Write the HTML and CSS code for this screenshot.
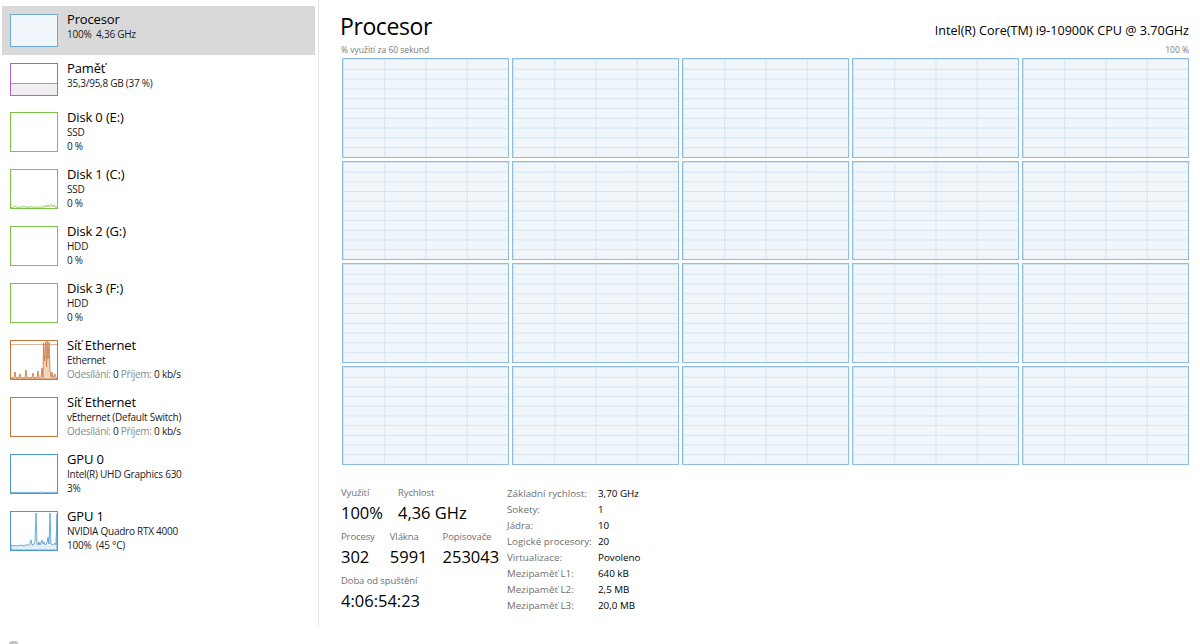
FILE: index.html
```html
<!DOCTYPE html>
<html lang="cs">
<head>
    <meta charset="UTF-8">
    <title>Správce úloh - Procesor</title>
    <link rel="stylesheet" href="styles.css">
</head>
<body>
<div class="app">
    <div class="sidebar">
        <div class="item short selected">
            <div class="thumb cpu"></div>
            <div class="info">
                <div class="name">Procesor</div>
                <div class="sub">100%&nbsp;&nbsp;4,36 GHz</div>
            </div>
        </div>
        <div class="item short">
            <div class="thumb mem"><div class="mem-used"></div></div>
            <div class="info">
                <div class="name">Paměť</div>
                <div class="sub">35,3/95,8 GB (37 %)</div>
            </div>
        </div>
        <div class="item">
            <div class="thumb disk"></div>
            <div class="info">
                <div class="name">Disk 0 (E:)</div>
                <div class="sub">SSD</div>
                <div class="sub">0 %</div>
            </div>
        </div>
        <div class="item">
            <div class="thumb disk">
                <svg viewBox="0 0 46 38" preserveAspectRatio="none">
                    <path d="M0 37.5 L3 37 L4 36.5 L6 37.3 L12 37 L13 36 L14 37.2 L20 37 L21 36.4 L22 37.3 L33 37 L34 35.5 L35 37 L37 35 L38 36.8 L40 34.5 L41 36.5 L43 35 L44 37 L46 37.4" fill="none" stroke="#7cc14a" stroke-width="0.8"/>
                </svg>
            </div>
            <div class="info">
                <div class="name">Disk 1 (C:)</div>
                <div class="sub">SSD</div>
                <div class="sub">0 %</div>
            </div>
        </div>
        <div class="item">
            <div class="thumb disk"></div>
            <div class="info">
                <div class="name">Disk 2 (G:)</div>
                <div class="sub">HDD</div>
                <div class="sub">0 %</div>
            </div>
        </div>
        <div class="item">
            <div class="thumb disk"></div>
            <div class="info">
                <div class="name">Disk 3 (F:)</div>
                <div class="sub">HDD</div>
                <div class="sub">0 %</div>
            </div>
        </div>
        <div class="item">
            <div class="thumb net">
                <svg viewBox="0 0 46 38" preserveAspectRatio="none">
                    <line x1="0" y1="3.5" x2="46" y2="3.5" stroke="#d9a37c" stroke-width="0.8"/>
                    <path d="M0 38 L0 37 L3 36.5 L4 31 L5 37 L8 36.5 L9 33 L10 37 L14 36.8 L15 29 L16 37 L21 36.6 L22 32 L23 37 L26 36.5 L27 30 L28 37 L30 36 L31 27 L32 36.5 L32.5 2 L33.5 20 L34.5 1 L35.5 26 L36 0 L37 18 L38 1 L39 30 L40 36 L41 31 L42 37 L44 33 L45 37 L46 37 L46 38 Z" fill="#f3d6c0" stroke="#c8743a" stroke-width="0.8"/>
                </svg>
            </div>
            <div class="info">
                <div class="name">Síť Ethernet</div>
                <div class="sub">Ethernet</div>
                <div class="sub"><span class="dim">Odesílání:</span> 0 <span class="dim">Příjem:</span> 0 kb/s</div>
            </div>
        </div>
        <div class="item">
            <div class="thumb net"></div>
            <div class="info">
                <div class="name">Síť Ethernet</div>
                <div class="sub">vEthernet (Default Switch)</div>
                <div class="sub"><span class="dim">Odesílání:</span> 0 <span class="dim">Příjem:</span> 0 kb/s</div>
            </div>
        </div>
        <div class="item">
            <div class="thumb gpu">
                <svg viewBox="0 0 46 38" preserveAspectRatio="none">
                    <path d="M0 37.4 L30 37.4 L31 36.6 L32 37.4 L46 37.3" fill="none" stroke="#4a9ad0" stroke-width="0.8"/>
                </svg>
            </div>
            <div class="info">
                <div class="name">GPU 0</div>
                <div class="sub">Intel(R) UHD Graphics 630</div>
                <div class="sub">3%</div>
            </div>
        </div>
        <div class="item">
            <div class="thumb gpu">
                <svg viewBox="0 0 46 38" preserveAspectRatio="none">
                    <path d="M0 38 L0 33 L2 34 L4 33.5 L7 34 L10 33 L13 34 L16 32.5 L18 33.5 L20 28 L21 33 L23 32.5 L24 30 L25 1 L26 31 L27 33 L28 30 L29 33 L31 28 L32 32 L33 30 L34 33 L36 31 L37 25 L38 32 L39 1 L40 32 L42 33 L44 31 L45 33 L46 2 L46 38 Z" fill="#e3eff8" stroke="#4a9ad0" stroke-width="0.8"/>
                </svg>
            </div>
            <div class="info">
                <div class="name">GPU 1</div>
                <div class="sub">NVIDIA Quadro RTX 4000</div>
                <div class="sub">100%&nbsp;&nbsp;(45 °C)</div>
            </div>
        </div>
    </div>

    <div class="main">
        <div class="head">
            <h1>Procesor</h1>
            <div class="cpu-name">Intel(R) Core(TM) i9-10900K CPU @ 3.70GHz</div>
        </div>
        <div class="axis">
            <span>% využití za 60 sekund</span>
            <span>100 %</span>
        </div>
        <div class="cores">
            <div class="core"></div><div class="core"></div><div class="core"></div><div class="core"></div><div class="core"></div>
            <div class="core"></div><div class="core"></div><div class="core"></div><div class="core"></div><div class="core"></div>
            <div class="core"></div><div class="core"></div><div class="core"></div><div class="core"></div><div class="core"></div>
            <div class="core"></div><div class="core"></div><div class="core"></div><div class="core"></div><div class="core"></div>
        </div>

        <div class="stats">
            <div class="live">
                <div class="stat-row">
                    <div class="stat"><div class="label">Využití</div><div class="value">100%</div></div>
                    <div class="stat"><div class="label">Rychlost</div><div class="value">4,36 GHz</div></div>
                </div>
                <div class="stat-row">
                    <div class="stat"><div class="label">Procesy</div><div class="value">302</div></div>
                    <div class="stat"><div class="label">Vlákna</div><div class="value">5991</div></div>
                    <div class="stat"><div class="label">Popisovače</div><div class="value">253043</div></div>
                </div>
                <div class="stat-row">
                    <div class="stat"><div class="label">Doba od spuštění</div><div class="value">4:06:54:23</div></div>
                </div>
            </div>
            <div class="specs">
                <span class="key">Základní rychlost:</span><span>3,70 GHz</span>
                <span class="key">Sokety:</span><span>1</span>
                <span class="key">Jádra:</span><span>10</span>
                <span class="key">Logické procesory:</span><span>20</span>
                <span class="key">Virtualizace:</span><span>Povoleno</span>
                <span class="key">Mezipaměť L1:</span><span>640 kB</span>
                <span class="key">Mezipaměť L2:</span><span>2,5 MB</span>
                <span class="key">Mezipaměť L3:</span><span>20,0 MB</span>
            </div>
        </div>
    </div>
</div>
<div class="footer"><div class="footer-icon"></div></div>
</body>
</html>
```

FILE: styles.css
```css
body { margin: 0; font-family: "Open Sans", "Noto Sans", sans-serif; color: #000; background: #fff; overflow: hidden; height: 644px; }
.app { display: flex; height: 628px; }

.sidebar { width: 313px; padding: 6px 3px 0 2px; border-right: 1px solid #e6e6e6; box-sizing: content-box; }
.item { display: flex; height: 57px; box-sizing: border-box; padding-top: 8px; }
.item.short { height: 49px; }
.item.selected { background: #d9d9d9; }
.thumb { width: 48px; height: 40px; margin-left: 8px; box-sizing: border-box; border: 1px solid #7cc14a; background: #fff; position: relative; overflow: hidden; }
.item.short .thumb { height: 33px; }
.thumb svg { display: block; width: 100%; height: 100%; }
.thumb.cpu { border-color: #6eaad8; background: #f1f6fa; }
.thumb.mem { border-color: #b35fcd; }
.mem-used { position: absolute; left: 0; right: 0; bottom: 0; height: 11px; border-top: 1px solid #c283d6; background: #f2eff3; }
.thumb.disk { border-color: #7cc14a; }
.thumb.net { border-color: #c8743a; }
.thumb.gpu { border-color: #4a9ad0; }

.info { margin-left: 9px; margin-top: -3px; }
.name { font-size: 13px; line-height: 16px; letter-spacing: -0.15px; }
.sub { font-size: 10px; line-height: 14px; letter-spacing: -0.25px; color: #1a1a1a; }
.dim { color: #8a8a8a; }

.main { flex: 1; padding: 8px 11px 0 21px; }
.head { display: flex; justify-content: space-between; align-items: baseline; height: 36px; }
.head h1 { margin: 0; font-size: 23px; font-weight: 400; line-height: 36px; letter-spacing: -0.4px; }
.cpu-name { font-size: 12.6px; }
.axis { display: flex; justify-content: space-between; font-size: 8.5px; line-height: 12px; color: #7a7a7a; padding-left: 1px; }
.cores { display: grid; grid-template-columns: repeat(5, 1fr); grid-template-rows: repeat(4, 99.5px); gap: 3px; margin: 2px 0 0 2px; }
.core {
    border: 1px solid #8fbde0;
    background-color: #f1f6fa;
    background-image: linear-gradient(to right, #d3e4f2 1px, transparent 1px), linear-gradient(to bottom, #d3e4f2 1px, transparent 1px);
    background-size: 25% 10%;
}

.stats { display: flex; margin-top: 21px; padding-left: 1px; }
.live { width: 166px; }
.stat-row { display: flex; gap: 15px; margin-bottom: 4px; }
.label { font-size: 9.5px; line-height: 14px; letter-spacing: -0.1px; color: #707070; }
.value { font-size: 16.5px; line-height: 26px; }
.specs { display: grid; grid-template-columns: 91px auto; grid-auto-rows: 16px; font-size: 9.8px; line-height: 16px; }
.specs .key { color: #707070; }

.footer { height: 16px; padding-left: 9px; }
.footer-icon { width: 9px; height: 3px; margin-top: 13px; background: #c4c4c4; border-radius: 3px 3px 0 0; }
```
